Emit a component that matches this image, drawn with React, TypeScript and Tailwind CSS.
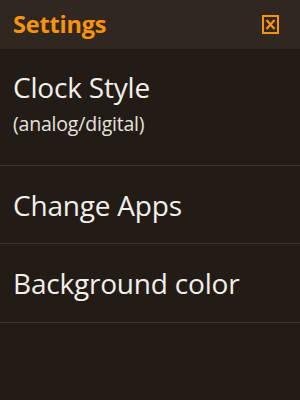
const items = [
  { label: 'Clock Style', sub: '(analog/digital)', h: 'h-[117px]' },
  { label: 'Change Apps', h: 'h-[78px]' },
  { label: 'Background color', h: 'h-[79px]' },
]

export default function App() {
  return (
    <div
      className="w-[300px] h-[400px] bg-[#231c16] flex flex-col overflow-hidden"
      style={{ fontFamily: '"Open Sans", "Noto Sans", sans-serif' }}
    >
      <header className="h-[49px] shrink-0 bg-[#302820] flex items-center justify-between pl-[13px] pr-[21px]">
        <span className="text-[23.5px] font-bold text-[#f7930f] leading-none tracking-[-0.2px]">Settings</span>
        <svg width="17" height="19" viewBox="0 0 17 19">
          <rect x="1" y="1" width="15" height="17" fill="none" stroke="#f7930f" strokeWidth="2" />
          <path d="M4.5 5 L12.5 14 M12.5 5 L4.5 14" stroke="#f7930f" strokeWidth="2.2" />
        </svg>
      </header>
      <ul className="flex flex-col">
        {items.map((it) => (
          <li
            key={it.label}
            className={`border-b border-[#3a332c] px-[13px] ${it.h} ${it.sub ? 'pt-[20px]' : 'flex items-center'}`}
          >
            <div>
              <div className="text-[28px] text-[#f2efea] leading-[36px] tracking-[-0.2px]">{it.label}</div>
              {it.sub && <div className="text-[19.5px] text-[#e6e2dc] leading-[24px] mt-[7px] tracking-[-0.2px]">{it.sub}</div>}
            </div>
          </li>
        ))}
      </ul>
    </div>
  )
}
